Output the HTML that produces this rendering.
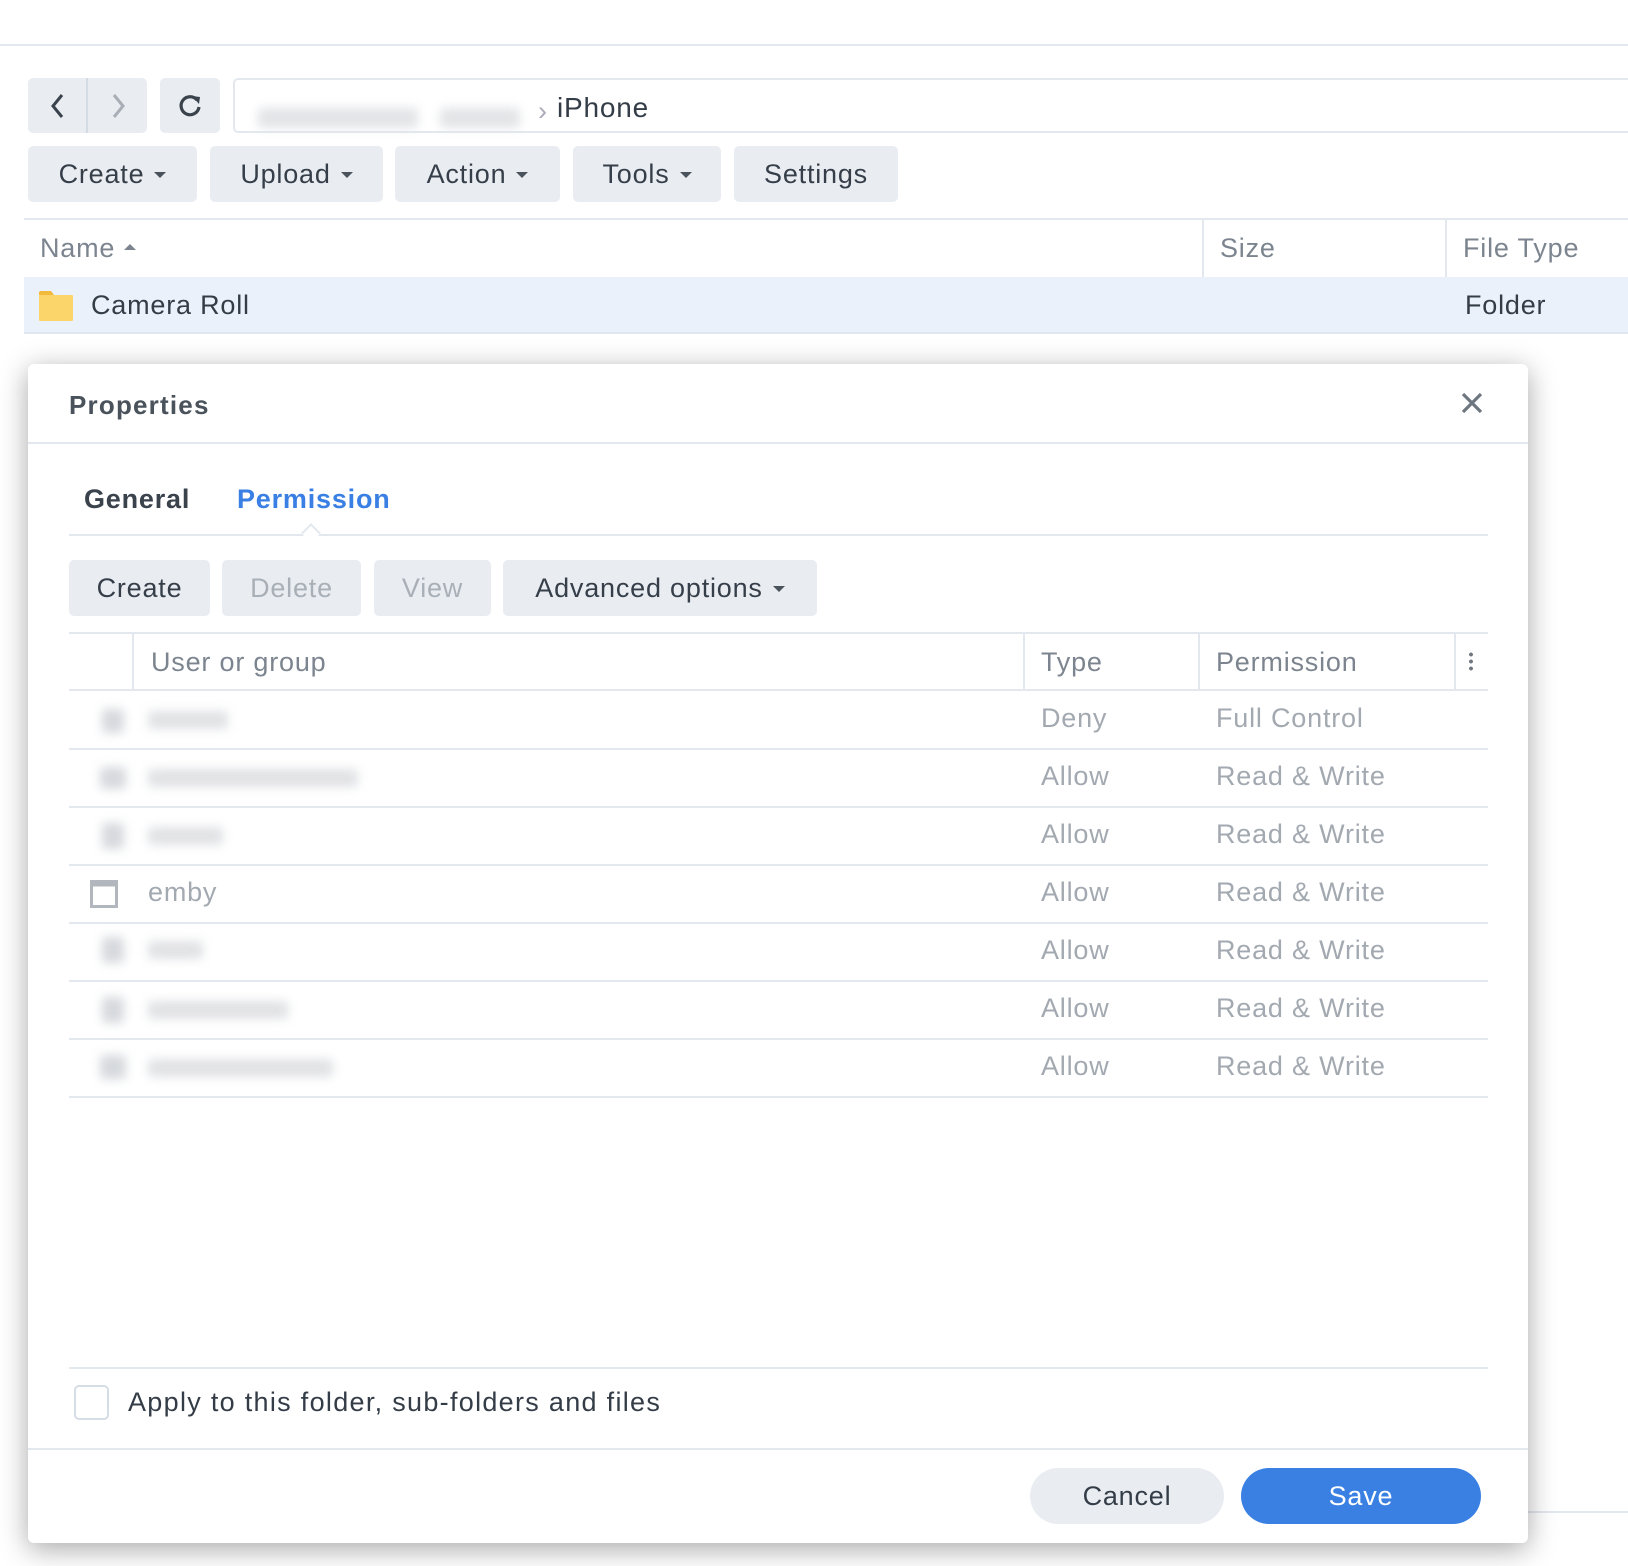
<!DOCTYPE html>
<html><head><meta charset="utf-8"><style>
*{box-sizing:border-box;margin:0;padding:0}
body{width:1628px;height:1566px;position:relative;background:#fff;font-family:"Liberation Sans",sans-serif;color:#343d47;overflow:hidden;letter-spacing:0.8px}
.a{position:absolute}
.btn{position:absolute;background:#e9edf2;border-radius:5px;font-size:27px;display:flex;align-items:center;justify-content:center;color:#363f49}
.car{display:inline-block;width:0;height:0;border-left:6px solid transparent;border-right:6px solid transparent;border-top:6px solid #4a525c;margin-left:10px;margin-top:2px}
.hl{position:absolute;height:2px;background:#e3e8ee}
.vl{position:absolute;width:2px;background:#e3e8ee}
.g{color:#a3a9b0;font-size:27px}
.blur{position:absolute;background:#d6d9dd;filter:blur(5px);border-radius:4px}
</style></head><body>
<div class="hl" style="left:0;top:44px;width:1628px"></div>
<div class="btn" style="left:28px;top:78px;width:119px;height:55px"></div>
<div class="vl" style="left:86px;top:78px;height:55px;background:#d5dbe2"></div>
<svg class="a" style="left:48px;top:92px" width="20" height="28"><path d="M14 3 L5 14 L14 25" stroke="#3a424c" stroke-width="3" fill="none"/></svg>
<svg class="a" style="left:108px;top:92px" width="20" height="28"><path d="M6 3 L15 14 L6 25" stroke="#a8aeb5" stroke-width="3" fill="none"/></svg>
<div class="btn" style="left:160px;top:78px;width:60px;height:55px"></div>
<svg class="a" style="left:176px;top:92px" width="28" height="28"><path d="M21 8 A9 9 0 1 0 23 15" stroke="#3a424c" stroke-width="3.2" fill="none"/><path d="M16 4 L24 5 L23 12 Z" fill="#3a424c"/></svg>
<div class="a" style="left:233px;top:78px;width:1400px;height:55px;border:2px solid #e3e8ee;border-right:none;border-radius:5px 0 0 5px"></div>
<div class="blur" style="left:258px;top:108px;width:160px;height:20px;background:#e2e4e7"></div>
<div class="blur" style="left:440px;top:108px;width:80px;height:20px;background:#e2e4e7"></div>
<div class="a" style="left:538px;top:96px;font-size:27px;color:#aab">›</div>
<div class="a" style="left:557px;top:92px;font-size:28px">iPhone</div>
<div class="btn" style="left:28px;top:146px;width:169px;height:56px">Create<span class="car"></span></div>
<div class="btn" style="left:210px;top:146px;width:173px;height:56px">Upload<span class="car"></span></div>
<div class="btn" style="left:395px;top:146px;width:165px;height:56px">Action<span class="car"></span></div>
<div class="btn" style="left:573px;top:146px;width:148px;height:56px">Tools<span class="car"></span></div>
<div class="btn" style="left:734px;top:146px;width:164px;height:56px">Settings</div>
<div class="hl" style="left:24px;top:218px;width:1604px"></div>
<div class="a" style="left:40px;top:233px;font-size:27px;color:#7c858f">Name <span style="display:inline-block;border-left:6px solid transparent;border-right:6px solid transparent;border-bottom:6px solid #7c858f;vertical-align:middle;margin-top:-6px"></span></div>
<div class="vl" style="left:1202px;top:220px;height:57px"></div>
<div class="vl" style="left:1445px;top:220px;height:57px"></div>
<div class="a" style="left:1220px;top:233px;font-size:27px;color:#7c858f">Size</div>
<div class="a" style="left:1463px;top:233px;font-size:27px;color:#7c858f">File Type</div>
<div class="a" style="left:24px;top:277px;width:1604px;height:57px;background:#eaf1fb;border-bottom:2px solid #dfe6ef"></div>
<svg class="a" style="left:39px;top:291px" width="34" height="30"><path d="M0 2 Q0 0 2 0 H12 L15 4 H0Z" fill="#f2b93d"/><rect x="0" y="4" width="34" height="26" rx="1" fill="#fbd46a"/></svg>
<div class="a" style="left:91px;top:290px;font-size:27px">Camera Roll</div>
<div class="a" style="left:1465px;top:290px;font-size:27px">Folder</div>
<div class="hl" style="left:1528px;top:1511px;width:100px"></div>
<div class="a" style="left:28px;top:364px;width:1500px;height:1179px;background:#fff;border-radius:6px;box-shadow:0 6px 28px rgba(0,0,0,.35)">
 <div class="a" style="left:41px;top:26px;font-size:26px;font-weight:bold;color:#4a525c;letter-spacing:1.2px">Properties</div>
 <svg class="a" style="left:1433px;top:28px" width="22" height="22"><path d="M2 2 L20 20 M20 2 L2 20" stroke="#6e7680" stroke-width="3.2"/></svg>
 <div class="hl" style="left:0;top:78px;width:1500px"></div>
 <div class="a" style="left:56px;top:120px;font-size:27px;font-weight:bold;color:#3a424c">General</div>
 <div class="a" style="left:209px;top:120px;font-size:27px;font-weight:bold;color:#3a7fe3">Permission</div>
 <div class="hl" style="left:41px;top:170px;width:1419px"></div>
 <div class="a" style="left:276px;top:162px;width:14px;height:14px;background:#fff;border-left:2px solid #e3e8ee;border-top:2px solid #e3e8ee;transform:rotate(45deg)"></div>
 <div class="btn" style="left:41px;top:196px;width:141px;height:56px">Create</div>
 <div class="btn" style="left:194px;top:196px;width:139px;height:56px;color:#a9afb6">Delete</div>
 <div class="btn" style="left:346px;top:196px;width:117px;height:56px;color:#a9afb6">View</div>
 <div class="btn" style="left:475px;top:196px;width:314px;height:56px">Advanced options<span class="car"></span></div>
 <div class="hl" style="left:41px;top:268px;width:1419px"></div>
 <div class="vl" style="left:104px;top:270px;height:57px"></div>
 <div class="vl" style="left:995px;top:270px;height:57px"></div>
 <div class="vl" style="left:1170px;top:270px;height:57px"></div>
 <div class="vl" style="left:1426px;top:270px;height:57px"></div>
 <div class="a" style="left:123px;top:283px;font-size:27px;color:#7c858f">User or group</div>
 <div class="a" style="left:1013px;top:283px;font-size:27px;color:#7c858f">Type</div>
 <div class="a" style="left:1188px;top:283px;font-size:27px;color:#7c858f">Permission</div>
 <div class="a" style="left:1441px;top:287px;width:4px;height:20px;background:radial-gradient(circle,#6e7680 1.8px,transparent 2px) 0 0/4px 7px"></div>
 <div class="hl" style="left:41px;top:325px;width:1419px"></div>
 <div class="a" style="left:0;top:327px;width:1500px">
  <div class="a" style="top:0;left:0;width:1500px;height:58px"><div class="blur" style="left:74px;top:18px;width:22px;height:24px"></div><div class="blur" style="left:120px;top:20px;width:80px;height:18px;background:#e0e2e5"></div><div class="a g" style="left:1013px;top:12px">Deny</div><div class="a g" style="left:1188px;top:12px">Full Control</div></div>
  <div class="hl" style="left:41px;top:57px;width:1419px"></div>
  <div class="a" style="top:58px;left:0;width:1500px;height:58px"><div class="blur" style="left:72px;top:18px;width:26px;height:22px"></div><div class="blur" style="left:120px;top:20px;width:210px;height:18px;background:#e0e2e5"></div><div class="a g" style="left:1013px;top:12px">Allow</div><div class="a g" style="left:1188px;top:12px">Read &amp; Write</div></div>
  <div class="hl" style="left:41px;top:115px;width:1419px"></div>
  <div class="a" style="top:116px;left:0;width:1500px;height:58px"><div class="blur" style="left:74px;top:16px;width:22px;height:26px"></div><div class="blur" style="left:120px;top:20px;width:75px;height:18px;background:#e0e2e5"></div><div class="a g" style="left:1013px;top:12px">Allow</div><div class="a g" style="left:1188px;top:12px">Read &amp; Write</div></div>
  <div class="hl" style="left:41px;top:173px;width:1419px"></div>
  <div class="a" style="top:174px;left:0;width:1500px;height:58px"><svg class="a" style="left:62px;top:15px" width="28" height="28"><rect x="1.5" y="1.5" width="25" height="25" fill="none" stroke="#b2b7bd" stroke-width="3"/><rect x="1.5" y="1.5" width="25" height="5" fill="#b2b7bd"/></svg><div class="a g" style="left:120px;top:12px">emby</div><div class="a g" style="left:1013px;top:12px">Allow</div><div class="a g" style="left:1188px;top:12px">Read &amp; Write</div></div>
  <div class="hl" style="left:41px;top:231px;width:1419px"></div>
  <div class="a" style="top:232px;left:0;width:1500px;height:58px"><div class="blur" style="left:74px;top:14px;width:22px;height:26px"></div><div class="blur" style="left:120px;top:18px;width:55px;height:18px;background:#e0e2e5"></div><div class="a g" style="left:1013px;top:12px">Allow</div><div class="a g" style="left:1188px;top:12px">Read &amp; Write</div></div>
  <div class="hl" style="left:41px;top:289px;width:1419px"></div>
  <div class="a" style="top:290px;left:0;width:1500px;height:58px"><div class="blur" style="left:74px;top:16px;width:22px;height:26px"></div><div class="blur" style="left:120px;top:20px;width:140px;height:18px;background:#e0e2e5"></div><div class="a g" style="left:1013px;top:12px">Allow</div><div class="a g" style="left:1188px;top:12px">Read &amp; Write</div></div>
  <div class="hl" style="left:41px;top:347px;width:1419px"></div>
  <div class="a" style="top:348px;left:0;width:1500px;height:58px"><div class="blur" style="left:72px;top:16px;width:26px;height:24px"></div><div class="blur" style="left:120px;top:20px;width:185px;height:18px;background:#e0e2e5"></div><div class="a g" style="left:1013px;top:12px">Allow</div><div class="a g" style="left:1188px;top:12px">Read &amp; Write</div></div>
  <div class="hl" style="left:41px;top:405px;width:1419px"></div>
 </div>
 <div class="hl" style="left:41px;top:1003px;width:1419px"></div>
 <div class="a" style="left:46px;top:1021px;width:35px;height:35px;border:2px solid #d5dde6;border-radius:5px"></div>
 <div class="a" style="left:100px;top:1023px;font-size:27px;letter-spacing:1.3px">Apply to this folder, sub-folders and files</div>
 <div class="hl" style="left:0;top:1084px;width:1500px"></div>
 <div class="a" style="left:1002px;top:1104px;width:194px;height:56px;border-radius:28px;background:#e9edf2;font-size:27px;display:flex;align-items:center;justify-content:center">Cancel</div>
 <div class="a" style="left:1213px;top:1104px;width:240px;height:56px;border-radius:28px;background:#3a80e3;color:#fff;font-size:27px;display:flex;align-items:center;justify-content:center">Save</div>
</div>
</body></html>
